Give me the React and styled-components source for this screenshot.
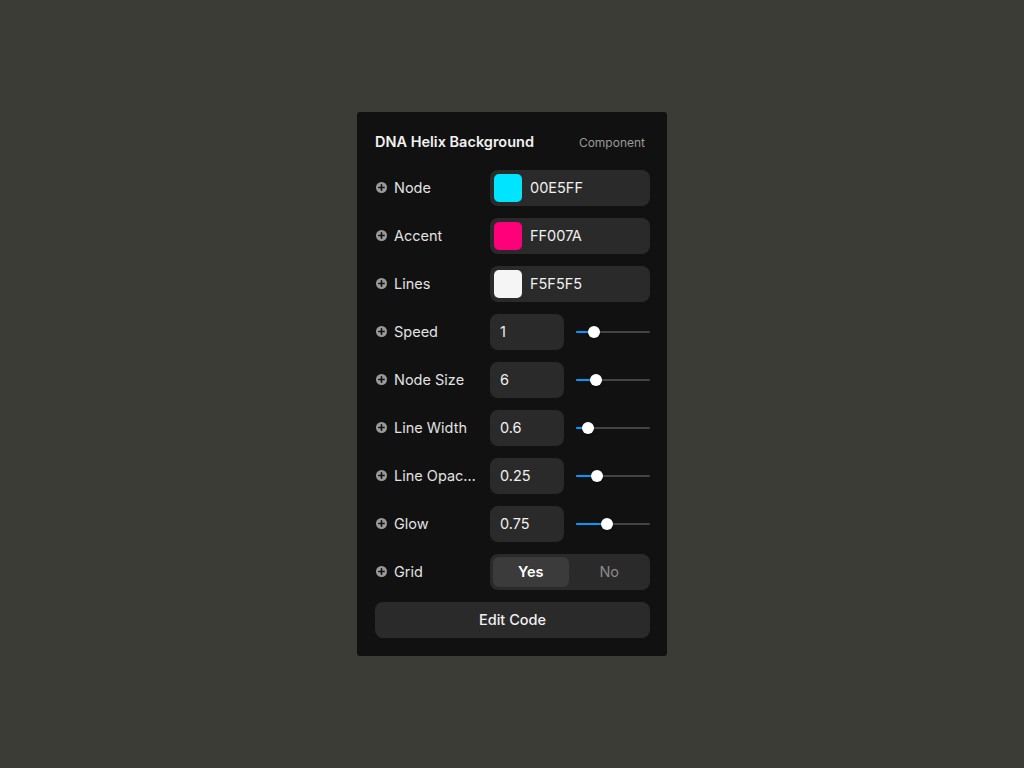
import React from "react";
import styled, { createGlobalStyle } from "styled-components";

const Global = createGlobalStyle`
  html, body { margin: 0; padding: 0; background: #3c3c37; }
  body { font-family: Inter, "Noto Sans", sans-serif; -webkit-font-smoothing: antialiased; }
`;

const Page = styled.div`
  width: 1024px;
  height: 768px;
  display: flex;
  align-items: flex-start;
  justify-content: center;
  padding-top: 112px;
  box-sizing: border-box;
`;

const Panel = styled.div`
  width: 310px;
  background: #111111;
  border-radius: 3px;
  padding: 18px 17px 18px 18px;
  box-sizing: border-box;
  display: flex;
  flex-direction: column;
  gap: 12px;
`;

const Header = styled.div`
  height: 24px;
  display: flex;
  align-items: center;
  justify-content: space-between;
  padding-right: 5px;
  margin-bottom: 4px;
`;

const Title = styled.div`
  color: #f2f2f2;
  font-size: 14.5px;
  font-weight: 600;
  line-height: 1;
`;

const Kind = styled.div`
  color: #9a9a9a;
  font-size: 12px;
`;

const Row = styled.div`
  height: 36px;
  display: flex;
  align-items: center;
`;

const Label = styled.div`
  width: 115px;
  flex: none;
  display: flex;
  align-items: center;
  gap: 7px;
  color: #e2e2e2;
  font-size: 14.5px;
  white-space: nowrap;
  overflow: hidden;
  margin-top: -1px;
`;

const LabelText = styled.span`
  overflow: hidden;
  text-overflow: ellipsis;
  max-width: 84px;
  display: block;
`;

const Field = styled.div`
  flex: 1;
  height: 36px;
  background: #2a2a2a;
  border-radius: 8px;
  display: flex;
  align-items: center;
  padding: 4px;
  box-sizing: border-box;
  color: #f0f0f0;
  font-size: 14.5px;
`;

const Swatch = styled.div`
  width: 28px;
  height: 28px;
  border-radius: 5px;
  background: ${(p) => p.$color};
  margin-right: 8px;
`;

const FieldText = styled.span`
  margin-top: -1px;
`;

const NumberBox = styled.div`
  width: 74px;
  flex: none;
  height: 36px;
  background: #2a2a2a;
  border-radius: 8px;
  display: flex;
  align-items: center;
  padding-left: 10px;
  padding-bottom: 1px;
  box-sizing: border-box;
  color: #f0f0f0;
  font-size: 14.5px;
`;

const Slider = styled.div`
  position: relative;
  margin-left: 12px;
  flex: 1;
  height: 12px;
  display: flex;
  align-items: center;
`;

const Track = styled.div`
  width: 100%;
  height: 2px;
  background: #444444;
  border-radius: 1px;
  position: relative;
`;

const Fill = styled.div`
  position: absolute;
  left: 0;
  top: 0;
  height: 2px;
  background: #0099ff;
  border-radius: 1px;
`;

const Thumb = styled.div`
  position: absolute;
  top: 50%;
  width: 12px;
  height: 12px;
  margin-left: -6px;
  margin-top: -6px;
  border-radius: 50%;
  background: #ffffff;
  box-shadow: 0 1px 2px rgba(0, 0, 0, 0.3);
`;

const Segmented = styled.div`
  flex: 1;
  height: 36px;
  background: #2a2a2a;
  border-radius: 8px;
  padding: 3px;
  box-sizing: border-box;
  display: grid;
  grid-template-columns: 1fr 1fr;
  gap: 3px;
`;

const Segment = styled.div`
  display: flex;
  align-items: center;
  justify-content: center;
  border-radius: 6px;
  padding-bottom: 1px;
  font-size: 14.5px;
  font-weight: ${(p) => (p.$active ? 600 : 400)};
  color: ${(p) => (p.$active ? "#ffffff" : "#8c8c8c")};
  background: ${(p) => (p.$active ? "#3b3b3b" : "transparent")};
`;

const Button = styled.div`
  height: 36px;
  background: #2a2a2a;
  border-radius: 8px;
  display: flex;
  align-items: center;
  justify-content: center;
  padding-bottom: 1px;
  box-sizing: border-box;
  color: #f0f0f0;
  font-size: 14.5px;
  font-weight: 500;
`;

const PlusIcon = () => (
  <svg width="11" height="11" viewBox="0 0 11 11" style={{ flex: "none", marginLeft: 1 }}>
    <circle cx="5.5" cy="5.5" r="5.5" fill="#9a9a9a" />
    <path d="M5.5 2.8v5.4M2.8 5.5h5.4" stroke="#111" strokeWidth="1.6" strokeLinecap="round" />
  </svg>
);

const RowLabel = ({ children }) => (
  <Label>
    <PlusIcon />
    <LabelText>{children}</LabelText>
  </Label>
);

const colors = [
  { label: "Node", color: "#00E5FF" },
  { label: "Accent", color: "#FF007A" },
  { label: "Lines", color: "#F5F5F5" },
];

const numbers = [
  { label: "Speed", value: "1", pos: 18 },
  { label: "Node Size", value: "6", pos: 19.5 },
  { label: "Line Width", value: "0.6", pos: 12 },
  { label: "Line Opacity", value: "0.25", pos: 21 },
  { label: "Glow", value: "0.75", pos: 30.5 },
];

export default function App() {
  return (
    <>
      <Global />
      <Page>
        <Panel>
          <Header>
            <Title>DNA Helix Background</Title>
            <Kind>Component</Kind>
          </Header>
          {colors.map((c) => (
            <Row key={c.label}>
              <RowLabel>{c.label}</RowLabel>
              <Field>
                <Swatch $color={c.color} />
                <FieldText>{c.color.slice(1)}</FieldText>
              </Field>
            </Row>
          ))}
          {numbers.map((n) => (
            <Row key={n.label}>
              <RowLabel>{n.label}</RowLabel>
              <NumberBox>{n.value}</NumberBox>
              <Slider>
                <Track>
                  <Fill style={{ width: `${n.pos}px` }} />
                </Track>
                <Thumb style={{ left: `${n.pos}px` }} />
              </Slider>
            </Row>
          ))}
          <Row>
            <RowLabel>Grid</RowLabel>
            <Segmented>
              <Segment $active>Yes</Segment>
              <Segment>No</Segment>
            </Segmented>
          </Row>
          <Button>Edit Code</Button>
        </Panel>
      </Page>
    </>
  );
}
